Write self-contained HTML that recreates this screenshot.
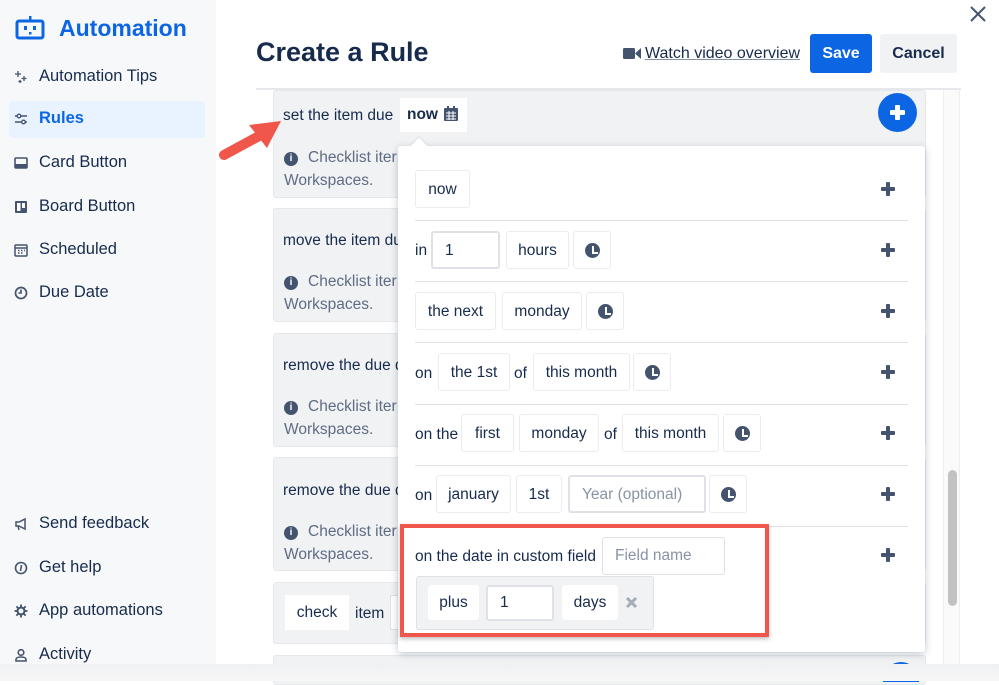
<!DOCTYPE html>
<html><head><meta charset="utf-8"><style>
*{box-sizing:border-box;margin:0;padding:0}
body{width:999px;height:681px;overflow:hidden;background:#fff;font-family:"Liberation Sans",sans-serif;color:#172b4d;position:relative}
.a{position:absolute}
.side{left:0;top:0;width:216px;height:681px;background:#f7f8f9}
.nav{position:absolute;left:14px;font-size:16.5px;color:#172b4d;display:flex;align-items:center}
.nav svg{width:14px;height:14px;margin-right:11px}
.card{position:absolute;left:273px;width:653px;background:#f1f2f4;border-radius:3px;border:1px solid #e6e8eb}
.t{position:absolute;font-size:15.5px;color:#172b4d}
.info{position:absolute;left:10px;font-size:15.5px;color:#5e6c84;line-height:23px}
.info i{display:inline-block;width:14px;height:14px;border-radius:50%;background:#44546f;color:#fff;font-style:normal;font-size:10px;text-align:center;line-height:14px;font-weight:bold;margin-right:10px;vertical-align:1px}
.pop{left:398px;top:146px;width:527px;height:506px;background:#fff;border-radius:3px;box-shadow:0 2px 8px rgba(9,30,66,.25)}
.row{position:absolute;left:17px;width:493px;border-top:1px solid #dfe1e6}
.chip{position:absolute;height:38px;border:1px solid #ebecf0;border-radius:3px;background:#fff;font-size:15.5px;line-height:38px;text-align:center;color:#172b4d}
.inp{border:2px solid #dfe1e6;text-align:left;padding-left:12px;line-height:35px}
.ph{color:#8993a4}
.lbl{position:absolute;font-size:15.5px;color:#172b4d}
.plus{position:absolute;left:483px;width:14px;height:14px}
.plus:before,.plus:after{content:"";position:absolute;background:#44546f;border-radius:1px}
.plus:before{left:5px;top:0;width:4px;height:14px}
.plus:after{left:0;top:5px;width:14px;height:4px}
.clk{position:absolute;width:38px;height:38px;border:1px solid #ebecf0;border-radius:3px}
.clk:before{content:"";position:absolute;left:11px;top:11px;width:15px;height:15px;border-radius:50%;background:#44546f}
.clk:after{content:"";position:absolute;left:18px;top:14px;width:4px;height:6px;border-left:2px solid #fff;border-bottom:2px solid #fff}
</style></head><body>
<div class="a side"></div>
<svg class="a" style="left:15px;top:16px" width="30" height="24" viewBox="0 0 30 24"><rect x="2" y="5" width="26" height="17" rx="2" fill="none" stroke="#0c66e4" stroke-width="3"/><rect x="14" y="0" width="2.5" height="4" fill="#0c66e4"/><rect x="9" y="10" width="3" height="4" fill="#0c66e4"/><rect x="18" y="10" width="3" height="4" fill="#0c66e4"/><rect x="14" y="16" width="2.5" height="2.5" fill="#0c66e4"/></svg>
<div class="a" style="left:59px;top:15px;font-size:23px;font-weight:bold;color:#0c66e4">Automation</div>
<div class="nav" style="top:67px"><svg viewBox="0 0 14 14"><path d="M4 1v6M1 4h6M10 6v5M7.5 8.5h5M6 10v3M4.5 11.5h3" stroke="#44546f" stroke-width="1.3"/></svg>Automation Tips</div>
<div class="a" style="left:9px;top:101px;width:196px;height:37px;background:#e9f2ff;border-radius:4px"></div>
<div class="nav" style="top:109px;color:#0c66e4;font-weight:bold"><svg viewBox="0 0 14 14"><path d="M1 4h12M1 10h12" stroke="#44546f" stroke-width="1.5"/><circle cx="5" cy="4" r="1.8" fill="#e9f2ff" stroke="#44546f" stroke-width="1.3"/><circle cx="9.5" cy="10" r="1.8" fill="#e9f2ff" stroke="#44546f" stroke-width="1.3"/></svg>Rules</div>
<div class="nav" style="top:153px"><svg viewBox="0 0 14 14"><rect x="1" y="2" width="12" height="10" rx="1" fill="none" stroke="#44546f" stroke-width="1.6"/><rect x="1" y="8" width="12" height="4" fill="#44546f"/></svg>Card Button</div>
<div class="nav" style="top:197px"><svg viewBox="0 0 14 14"><rect x="1" y="1" width="12" height="12" rx="1" fill="#44546f"/><rect x="3" y="3" width="3.5" height="8" fill="#fff"/><rect x="8" y="3" width="3" height="5" fill="#fff"/></svg>Board Button</div>
<div class="nav" style="top:240px"><svg viewBox="0 0 14 14"><rect x="1" y="2" width="12" height="11" rx="1" fill="none" stroke="#44546f" stroke-width="1.5"/><path d="M1 5h12M4 7.5h1.5M7 7.5h1.5M10 7.5h1M4 10h1.5M7 10h1.5" stroke="#44546f" stroke-width="1.4"/></svg>Scheduled</div>
<div class="nav" style="top:283px"><svg viewBox="0 0 14 14"><circle cx="7" cy="7" r="5.5" fill="none" stroke="#44546f" stroke-width="1.7"/><path d="M7 3.5V7H4.5" fill="none" stroke="#44546f" stroke-width="1.6"/></svg>Due Date</div>
<div class="nav" style="top:514px"><svg viewBox="0 0 14 14"><path d="M2 5h3l6-3v10l-6-3H2zM4 9l1 4" fill="none" stroke="#44546f" stroke-width="1.5"/></svg>Send feedback</div>
<div class="nav" style="top:558px"><svg viewBox="0 0 14 14"><circle cx="7" cy="7" r="5.5" fill="none" stroke="#44546f" stroke-width="1.6"/><path d="M7.5 4L6.5 10" stroke="#44546f" stroke-width="1.6"/></svg>Get help</div>
<div class="nav" style="top:601px"><svg viewBox="0 0 14 14"><circle cx="7" cy="7" r="3.5" fill="none" stroke="#44546f" stroke-width="2"/><path d="M7 0.5v3M7 10.5v3M0.5 7h3M10.5 7h3M2.4 2.4l2.1 2.1M9.5 9.5l2.1 2.1M2.4 11.6l2.1-2.1M9.5 4.5l2.1-2.1" stroke="#44546f" stroke-width="1.8"/></svg>App automations</div>
<div class="nav" style="top:645px"><svg viewBox="0 0 14 14"><circle cx="7" cy="4.5" r="2.8" fill="none" stroke="#44546f" stroke-width="1.6"/><path d="M2 13v-1.5C2 9.5 4 9 7 9s5 .5 5 2.5V13z" fill="none" stroke="#44546f" stroke-width="1.6"/></svg>Activity</div>

<div class="a" style="left:256px;top:37px;font-size:27px;font-weight:bold;color:#172b4d">Create a Rule</div>
<svg class="a" style="left:623px;top:47px" width="18" height="13" viewBox="0 0 18 13"><rect x="0" y="1" width="12" height="11" rx="1.5" fill="#44546f"/><path d="M12 6.5L18 1v11z" fill="#44546f"/></svg>
<div class="a" style="left:645px;top:45px;font-size:16px;color:#172b4d;text-decoration:underline;text-decoration-color:#8590a2">Watch video overview</div>
<div class="a" style="left:810px;top:34px;width:62px;height:39px;background:#0c66e4;border-radius:3px;color:#fff;font-weight:bold;font-size:16px;text-align:center;line-height:39px">Save</div>
<div class="a" style="left:880px;top:34px;width:77px;height:39px;background:#f1f2f4;border-radius:3px;color:#172b4d;font-weight:bold;font-size:16px;text-align:center;line-height:39px">Cancel</div>
<svg class="a" style="left:969px;top:5px" width="18" height="18" viewBox="0 0 18 18"><path d="M2 2l14 14M16 2L2 16" stroke="#44546f" stroke-width="2"/></svg>
<div class="a" style="left:256px;top:88px;width:705px;height:2px;background:#e6e8eb"></div>
<div class="a" style="left:943px;top:90px;width:17px;height:575px;background:#fafafa;border-left:1px solid #eee;border-right:1px solid #eee"></div>
<div class="a" style="left:948px;top:470px;width:9px;height:136px;background:#c2c2c2;border-radius:5px"></div>

<div class="card" style="top:90px;height:108px"><div class="t" style="left:9px;top:16px">set the item due</div>
<div class="a" style="left:126px;top:7px;width:67px;height:34px;background:#fff;font-weight:bold;font-size:15.5px;line-height:34px;padding-left:7px;color:#172b4d">now <svg width="14" height="15" viewBox="0 0 14 15" style="vertical-align:-2px;margin-left:2px"><rect x="0" y="2" width="14" height="13" rx="1" fill="#44546f"/><rect x="3" y="0" width="2" height="3" fill="#44546f"/><rect x="9" y="0" width="2" height="3" fill="#44546f"/><path d="M2 7h10M2 10h10M2 13h10M5 5v9M9 5v9" stroke="#fff" stroke-width="1"/></svg></div>
<div class="info" style="top:55px"><i>i</i>Checklist iter<br>Workspaces.</div></div>
<div class="a" style="left:878px;top:93px;width:39px;height:39px;border-radius:50%;background:#0c66e4"></div>
<div class="a" style="left:895px;top:105px;width:5px;height:15px;background:#fff;border-radius:1px"></div>
<div class="a" style="left:890px;top:110px;width:15px;height:5px;background:#fff;border-radius:1px"></div>
<div class="card" style="top:208px;height:114px"><div class="t" style="left:9px;top:23px">move the item du</div><div class="info" style="top:61px"><i>i</i>Checklist iter<br>Workspaces.</div></div>
<div class="card" style="top:333px;height:114px"><div class="t" style="left:9px;top:23px">remove the due d</div><div class="info" style="top:61px"><i>i</i>Checklist iter<br>Workspaces.</div></div>
<div class="card" style="top:457px;height:114px"><div class="t" style="left:9px;top:24px">remove the due d</div><div class="info" style="top:62px"><i>i</i>Checklist iter<br>Workspaces.</div></div>
<div class="card" style="top:582px;height:62px"><div class="a" style="left:11px;top:12px;width:64px;height:35px;background:#fff;font-size:15.5px;line-height:35px;text-align:center">check</div><div class="t" style="left:81px;top:22px">item</div><div class="a" style="left:116px;top:12px;width:10px;height:35px;background:#fff;border:1px solid #dfe1e6"></div></div>
<div class="card" style="top:655px;height:30px"></div>
<div class="a" style="left:883px;top:662px;width:36px;height:20px;border-radius:18px 18px 0 0;background:#0c66e4"></div>

<div class="a pop">
<div class="a" style="left:15px;top:-6px;width:12px;height:12px;background:#fff;transform:rotate(45deg);box-shadow:-1px -1px 1px rgba(9,30,66,.08)"></div>
<div class="chip" style="left:17px;top:24px;width:55px">now</div><div class="plus" style="top:36px"></div>
<div class="row" style="top:74px"></div>
<div class="lbl" style="left:17px;top:96px">in</div><div class="chip inp" style="left:33px;top:85px;width:69px">1</div><div class="chip" style="left:108px;top:85px;width:63px">hours</div><div class="clk" style="left:175px;top:85px"></div><div class="plus" style="top:97px"></div>
<div class="row" style="top:135px"></div>
<div class="chip" style="left:17px;top:146px;width:81px">the next</div><div class="chip" style="left:104px;top:146px;width:80px">monday</div><div class="clk" style="left:188px;top:146px"></div><div class="plus" style="top:158px"></div>
<div class="row" style="top:196px"></div>
<div class="lbl" style="left:17px;top:219px">on</div><div class="chip" style="left:40px;top:207px;width:72px">the 1st</div><div class="lbl" style="left:116px;top:219px">of</div><div class="chip" style="left:135px;top:207px;width:97px">this month</div><div class="clk" style="left:235px;top:207px"></div><div class="plus" style="top:219px"></div>
<div class="row" style="top:258px"></div>
<div class="lbl" style="left:17px;top:280px">on the</div><div class="chip" style="left:63px;top:268px;width:53px">first</div><div class="chip" style="left:121px;top:268px;width:80px">monday</div><div class="lbl" style="left:206px;top:280px">of</div><div class="chip" style="left:224px;top:268px;width:97px">this month</div><div class="clk" style="left:325px;top:268px"></div><div class="plus" style="top:280px"></div>
<div class="row" style="top:319px"></div>
<div class="lbl" style="left:17px;top:341px">on</div><div class="chip" style="left:38px;top:329px;width:75px">january</div><div class="chip" style="left:118px;top:329px;width:46px">1st</div><div class="chip inp ph" style="left:170px;top:329px;width:138px">Year (optional)</div><div class="clk" style="left:311px;top:329px"></div><div class="plus" style="top:341px"></div>
<div class="row" style="top:380px"></div>
<div class="lbl" style="left:17px;top:402px">on the date in custom field</div><div class="chip inp ph" style="left:204px;top:391px;width:123px;border-width:1px">Field name</div><div class="plus" style="top:402px"></div>
<div class="a" style="left:18px;top:430px;width:238px;height:54px;background:#f1f2f4;border:1px solid #dfe1e6;border-radius:3px"></div>
<div class="chip" style="left:30px;top:439px;width:51px;border:none;height:35px;line-height:35px">plus</div>
<div class="chip inp" style="left:88px;top:439px;width:68px;height:36px;line-height:32px">1</div>
<div class="chip" style="left:164px;top:439px;width:56px;border:none;height:35px;line-height:35px">days</div>
<svg class="a" style="left:227px;top:450px" width="13" height="13" viewBox="0 0 13 13"><path d="M2 2l9 9M11 2l-9 9" stroke="#a5adba" stroke-width="3"/></svg>
</div>
<div class="a" style="left:400px;top:524px;width:369px;height:113px;border:4px solid #f0564a;box-shadow:0 2px 4px rgba(0,0,0,.25)"></div>
<svg class="a" style="left:217px;top:118px" width="68" height="46" viewBox="0 0 68 46"><path d="M7 37L44 17" stroke="#f0564a" stroke-width="10" stroke-linecap="round"/><path d="M32 7L64 3L50 30z" fill="#f0564a"/></svg>
<div class="a" style="left:0;top:664px;width:999px;height:17px;background:linear-gradient(#f0f1f2,#f7f7f8)"></div>
</body></html>
